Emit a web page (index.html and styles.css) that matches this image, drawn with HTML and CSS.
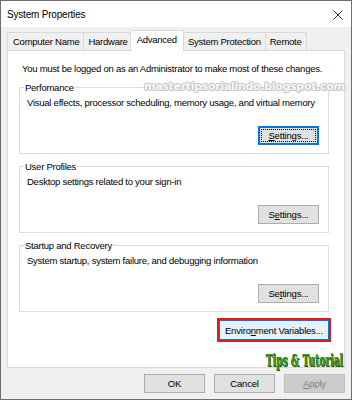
FILE: index.html
```html
<!DOCTYPE html>
<html>
<head>
<meta charset="utf-8">
<link rel="stylesheet" href="styles.css">
</head>
<body>
<div class="window">
  <div class="titlebar">
    <span class="title">System Properties</span>
    <svg class="close" width="10" height="10" viewBox="0 0 10 10"><path d="M0.5 0.5 L9.5 9.5 M9.5 0.5 L0.5 9.5" stroke="#333" stroke-width="1" fill="none"/></svg>
  </div>
  <div class="body">
    <div class="tabs">
      <div class="tab">Computer Name</div>
      <div class="tab">Hardware</div>
      <div class="tab selected">Advanced</div>
      <div class="tab">System Protection</div>
      <div class="tab">Remote</div>
    </div>
    <div class="panel">
      <p class="note">You must be logged on as an Administrator to make most of these changes.</p>
      <fieldset class="group">
        <legend>Perfomance</legend>
        <p class="desc">Visual effects, processor scheduling, memory usage, and virtual memory</p>
        <div class="row"><button class="btn focus"><u>S</u>ettings...</button></div>
      </fieldset>
      <fieldset class="group">
        <legend>User Profiles</legend>
        <p class="desc">Desktop settings related to your sign-in</p>
        <div class="row"><button class="btn">S<u>e</u>ttings...</button></div>
      </fieldset>
      <fieldset class="group">
        <legend>Startup and Recovery</legend>
        <p class="desc">System startup, system failure, and debugging information</p>
        <div class="row"><button class="btn">Se<u>t</u>tings...</button></div>
      </fieldset>
      <div class="row env-row"><button class="btn env">Enviro<u>n</u>ment Variables...</button></div>
    </div>
    <div class="footer">
      <button class="btn">OK</button>
      <button class="btn">Cancel</button>
      <button class="btn disabled"><u>A</u>pply</button>
    </div>
  </div>
  <div class="wm-blog">mastertipsorialindo.blogspot.com</div>
  <div class="wm-tips">Tips &amp; Tutorial</div>
</div>
</body>
</html>
```

FILE: styles.css
```css
* { box-sizing: border-box; }
html, body { margin: 0; padding: 0; background: #fff; }
body {
  font-family: "Liberation Sans", Arial, sans-serif;
  font-size: 9.5px;
  letter-spacing: -0.25px;
  color: #000;
}
.window {
  position: relative;
  width: 352px;
  height: 400px;
  border: 1px solid #6e6e6e;
  background: #f0f0f0;
  display: flex;
  flex-direction: column;
  overflow: hidden;
}
.titlebar {
  height: 26px;
  background: #fff;
  display: flex;
  align-items: center;
  justify-content: space-between;
  padding: 0 8px 0 6px;
  flex: none;
}
.title { font-size: 10px; letter-spacing: -0.2px; margin-top: 1px; }
.close { display: block; margin-top: 1px; }
.body {
  flex: 1;
  padding: 3px 6px 6px 6px;
  display: flex;
  flex-direction: column;
}
.tabs {
  display: flex;
  align-items: flex-end;
  height: 20px;
  flex: none;
}
.tab {
  height: 18px;
  line-height: 17px;
  padding: 0 4px;
  border: 1px solid #d9d9d9;
  border-bottom: none;
  background: #f0f0f0;
  margin-right: -1px;
  white-space: nowrap;
}
.tab:first-child { padding-left: 5px; }
.tab.selected {
  height: 21px;
  line-height: 18px;
  background: #fff;
  margin: 0 -2px -1px -2px;
  padding: 0 6px;
  position: relative;
  z-index: 1;
}
.tab.selected + .tab { margin-left: 1px; }
.panel {
  height: 318px;
  flex: none;
  background: #fff;
  border: 1px solid #d9d9d9;
  padding: 11px 15px 0 11px;
  display: flex;
  flex-direction: column;
}
.note {
  margin: 0 0 0 3px;
  line-height: 13px;
  white-space: nowrap;
}
.group {
  margin: 6px 0 0 0;
  border: 1px solid #dcdcdc;
  padding: 2px 9px 8px 7px;
  min-width: 0;
}
.group legend {
  padding: 0 1px;
  margin-left: -3px;
  line-height: 13px;
}
.desc {
  margin: 0;
  line-height: 13px;
  white-space: nowrap;
}
.row {
  display: flex;
  justify-content: flex-end;
  margin-top: 17px;
}
.btn {
  font-family: inherit;
  font-size: 9.5px;
  letter-spacing: -0.2px;
  color: #000;
  background: #e1e1e1;
  border: 1px solid #adadad;
  height: 19px;
  width: 61px;
  padding: 0;
  margin: 0;
  white-space: nowrap;
}
.btn u { text-decoration-thickness: 1px; text-underline-offset: 1px; }
.btn.focus {
  border-color: #0078d7;
  box-shadow: inset 0 0 0 1px #0078d7;
  outline: 1px dotted #000;
  outline-offset: -4px;
}
.env-row { margin-top: 8px; }
.btn.env {
  width: 110px;
  height: 20px;
  background: #e5f1fb;
  border-color: #0078d7;
  outline: 2px solid #e3191c;
}
.footer {
  display: flex;
  justify-content: flex-end;
  gap: 9px;
  margin-top: 6px;
}
.btn.disabled {
  background: #cccccc;
  border-color: #bfbfbf;
  color: #838383;
}
.wm-blog {
  position: absolute;
  left: 143px;
  top: 79px;
  font-family: "DejaVu Sans", sans-serif;
  font-weight: bold;
  font-size: 11px;
  letter-spacing: -0.3px;
  color: #f7f7f7;
  text-shadow: 1px 0 0 #c2c2c2, -1px 0 0 #c2c2c2, 0 1px 0 #c2c2c2, 0 -1px 0 #c2c2c2, 1px 1px 1px #d4d4d4;
  white-space: nowrap;
}
.wm-tips {
  position: absolute;
  right: 8px;
  top: 349px;
  font-family: "DejaVu Serif", serif;
  font-weight: bold;
  font-size: 17px;
  letter-spacing: 0;
  color: #3f9a1a;
  text-shadow: 1px 1px 0 #1d4a0c, -0.5px -0.5px 0 #2c6a12;
  transform: scaleX(0.54);
  transform-origin: right center;
  white-space: nowrap;
}
```
